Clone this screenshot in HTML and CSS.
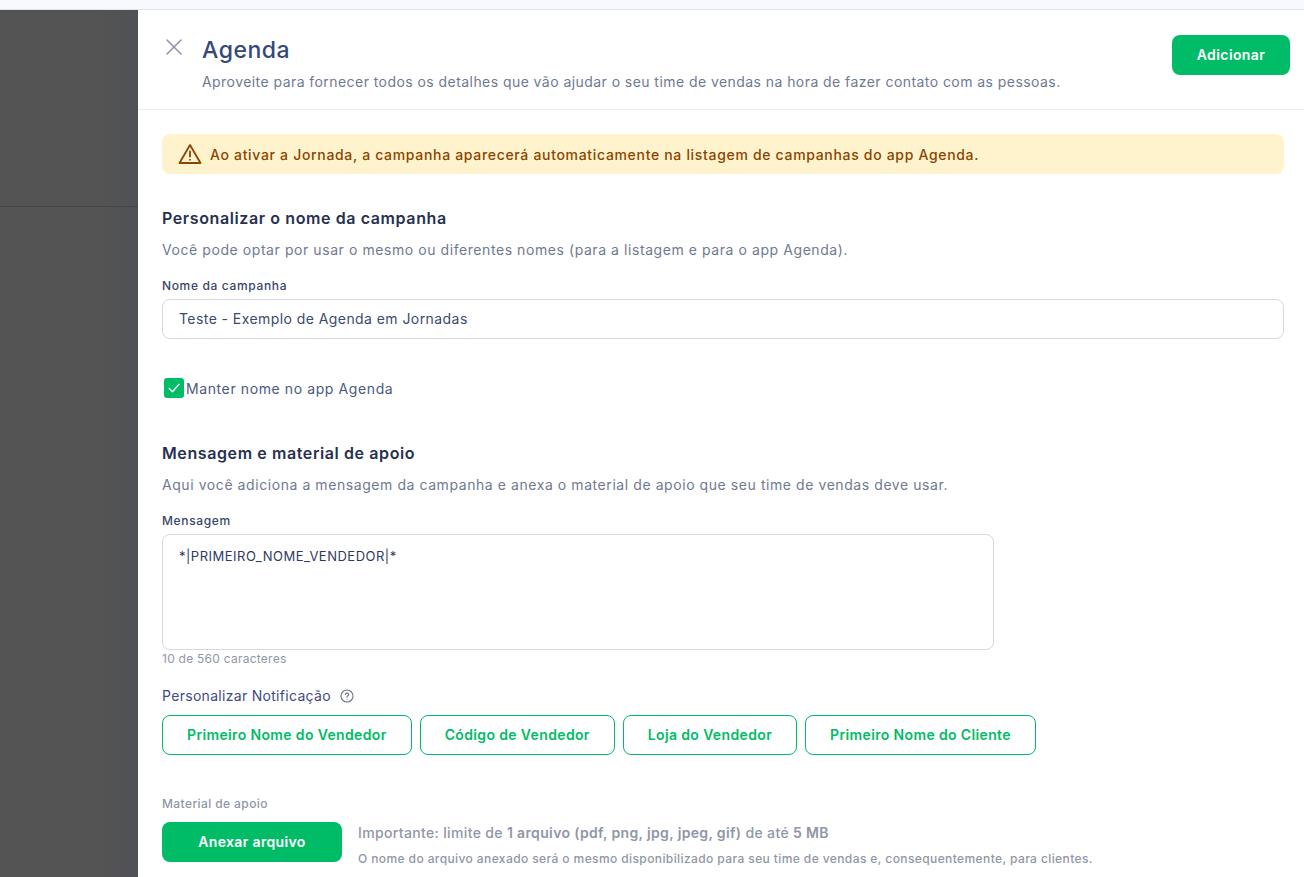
FILE: index.html
```html
<!DOCTYPE html>
<html lang="pt-BR">
<head>
  <meta charset="UTF-8">
  <meta name="viewport" content="width=device-width, initial-scale=1.0">
  <title>Agenda</title>
  <link rel="stylesheet" href="styles.css">
</head>
<body>
  <div class="top-strip"></div>
  <div class="stage">
    <!-- fundo escurecido atrás do painel -->
    <div class="scrim">
      <div class="scrim-top"></div>
    </div>

    <div class="panel">
      <header class="panel-header">
        <button class="close-btn" aria-label="Fechar">
          <svg width="18" height="18" viewBox="0 0 18 18" fill="none" stroke="#8a93a8" stroke-width="1.5" stroke-linecap="round">
            <path d="M2 2 L16 16 M16 2 L2 16"/>
          </svg>
        </button>
        <div class="header-text">
          <h1>Agenda</h1>
          <p>Aproveite para fornecer todos os detalhes que vão ajudar o seu time de vendas na hora de fazer contato com as pessoas.</p>
        </div>
        <button class="btn btn-add">Adicionar</button>
      </header>

      <div class="panel-body">
        <div class="alert">
          <svg width="24" height="22" viewBox="0 0 24 22" fill="none" stroke="#8a4500" stroke-width="1.8" stroke-linejoin="round" stroke-linecap="round">
            <path d="M12 2 L22.5 20 H1.5 Z"/>
            <path d="M12 8.5 V13.5"/>
            <path d="M12 16.6 V16.8"/>
          </svg>
          <span>Ao ativar a Jornada, a campanha aparecerá automaticamente na listagem de campanhas do app Agenda.</span>
        </div>

        <section class="section-name">
          <h2>Personalizar o nome da campanha</h2>
          <p class="hint">Você pode optar por usar o mesmo ou diferentes nomes (para a listagem e para o app Agenda).</p>
          <label class="field-label">Nome da campanha</label>
          <div class="input">Teste - Exemplo de Agenda em Jornadas</div>
          <div class="check-row">
            <span class="checkbox">
              <svg width="12" height="10" viewBox="0 0 12 10" fill="none" stroke="#fff" stroke-width="1.3" stroke-linecap="round" stroke-linejoin="round">
                <path d="M1.2 5.5 L4.5 8.7 L11 1.2"/>
              </svg>
            </span>
            <span>Manter nome no app Agenda</span>
          </div>
        </section>

        <section class="section-message">
          <h2>Mensagem e material de apoio</h2>
          <p class="hint">Aqui você adiciona a mensagem da campanha e anexa o material de apoio que seu time de vendas deve usar.</p>
          <label class="field-label">Mensagem</label>
          <div class="textarea">*|PRIMEIRO_NOME_VENDEDOR|*</div>
          <div class="counter">10 de 560 caracteres</div>

          <div class="notif-title">
            <span>Personalizar Notificação</span>
            <svg width="14" height="14" viewBox="0 0 14 14" fill="none" stroke="#6f7687" stroke-width="1.1" stroke-linecap="round">
              <circle cx="7" cy="7" r="6"/>
              <path d="M5.4 5.6 C5.4 3.6 8.7 3.7 8.7 5.5 C8.7 6.8 7 6.7 7 8.1"/>
              <path d="M7 10 V10.1"/>
            </svg>
          </div>
          <div class="tags">
            <button class="btn-tag">Primeiro Nome do Vendedor</button>
            <button class="btn-tag">Código de Vendedor</button>
            <button class="btn-tag">Loja do Vendedor</button>
            <button class="btn-tag">Primeiro Nome do Cliente</button>
          </div>

          <div class="material-label">Material de apoio</div>
          <div class="material-row">
            <button class="btn btn-attach">Anexar arquivo</button>
            <div class="material-info">
              <p class="limit">Importante: limite de <b>1 arquivo (pdf, png, jpg, jpeg, gif)</b> de até <b>5 MB</b></p>
              <p class="note">O nome do arquivo anexado será o mesmo disponibilizado para seu time de vendas e, consequentemente, para clientes.</p>
            </div>
          </div>
        </section>
      </div>
    </div>
  </div>
</body>
</html>
```

FILE: styles.css
```css
* {
  box-sizing: border-box;
}

html, body {
  height: 100%;
}

body {
  margin: 0;
  overflow: hidden;
  font-family: "Inter", "Noto Sans", sans-serif;
  background-color: #fff;
  color: #3b4a70;
}

h1, h2, p {
  margin: 0;
}

button {
  font-family: inherit;
  cursor: pointer;
}

.top-strip {
  height: 10px;
  background-color: #f8f8ff;
  border-bottom: 1px solid #e2e2ea;
}

.stage {
  display: flex;
  height: 867px;
}

.scrim {
  width: 138px;
  flex-shrink: 0;
  background: linear-gradient(to right, #545454 70%, #505157 100%);
}

.scrim-top {
  height: 197px;
  border-bottom: 1px solid #45464a;
}

.panel {
  flex: 1;
  background-color: #fff;
  border-top-left-radius: 8px;
  overflow: hidden;
}

.panel-header {
  display: flex;
  align-items: flex-start;
  height: 100px;
  padding: 20px 14px 0 27px;
  border-bottom: 1px solid #eeeef2;
}

.close-btn {
  width: 18px;
  height: 18px;
  padding: 0;
  margin-top: 8px;
  border: none;
  background: none;
  display: flex;
}

.header-text {
  flex: 1;
  margin-left: 19px;
}

.header-text h1 {
  font-size: 23px;
  font-weight: 500;
  line-height: 40px;
  letter-spacing: 0.5px;
  color: #34497a;
}

.header-text p {
  font-size: 14px;
  line-height: 24px;
  letter-spacing: 0.44px;
  color: #6f7a92;
}

.btn {
  padding: 0 0 2px;
  border: none;
  border-radius: 8px;
  background-color: #00bc66;
  color: #fff;
  font-weight: 600;
  font-size: 14px;
}

.btn-add {
  width: 118px;
  height: 40px;
  margin-top: 5px;
  letter-spacing: 0.4px;
}

.panel-body {
  padding: 24px 20px 0 24px;
}

.alert {
  display: flex;
  align-items: center;
  gap: 8px;
  height: 40px;
  padding-left: 16px;
  border-radius: 8px;
  background-color: #fff3cd;
  color: #8a4500;
  font-size: 14px;
  font-weight: 500;
  letter-spacing: 0.68px;
}

.section-name {
  margin-top: 33px;
}

h2 {
  font-size: 16px;
  font-weight: 600;
  line-height: 22px;
  letter-spacing: 0.6px;
  color: #27304f;
}

.hint {
  margin-top: 10px;
  font-size: 14px;
  line-height: 22px;
  letter-spacing: 0.57px;
  color: #6f7a92;
}

.field-label {
  display: block;
  margin-top: 16px;
  font-size: 12px;
  font-weight: 500;
  line-height: 18px;
  letter-spacing: 0.65px;
  color: #39456a;
}

.input {
  height: 40px;
  margin-top: 4px;
  padding: 0 16px;
  border: 1px solid #d6d9e0;
  border-radius: 8px;
  font-size: 14px;
  line-height: 38px;
  letter-spacing: 0.43px;
  color: #3b4a70;
}

.check-row {
  display: flex;
  align-items: center;
  margin-top: 39px;
  padding-left: 2px;
  font-size: 14px;
  letter-spacing: 0.6px;
  color: #4a5a80;
}

.checkbox {
  width: 20px;
  height: 20px;
  border-radius: 3px;
  background-color: #00bc66;
  display: flex;
  align-items: center;
  justify-content: center;
  margin-right: 2px;
}

.section-message {
  margin-top: 44px;
}

.textarea {
  width: 832px;
  height: 116px;
  margin-top: 4px;
  padding: 11px 16px;
  border: 1px solid #d6d9e0;
  border-radius: 8px;
  font-size: 13px;
  line-height: 20px;
  letter-spacing: 0.5px;
  color: #2f3b5e;
}

.counter {
  margin-top: 1px;
  font-size: 12px;
  line-height: 16px;
  letter-spacing: 0.25px;
  color: #8f96a8;
}

.notif-title {
  display: flex;
  align-items: center;
  gap: 9px;
  margin-top: 19px;
  font-size: 14px;
  line-height: 20px;
  letter-spacing: 0.3px;
  color: #3f4a80;
}

.tags {
  display: flex;
  gap: 8px;
  margin-top: 9px;
}

.btn-tag {
  height: 40px;
  padding: 0 24px 1px;
  border: 1px solid #00bc66;
  border-radius: 8px;
  background-color: #fff;
  color: #00bc66;
  font-size: 14px;
  font-weight: 600;
  letter-spacing: 0.36px;
}

.material-label {
  margin-top: 40px;
  font-size: 12px;
  font-weight: 500;
  line-height: 18px;
  letter-spacing: 0.4px;
  color: #8f96a8;
}

.material-row {
  display: flex;
  gap: 16px;
  margin-top: 9px;
}

.btn-attach {
  width: 180px;
  height: 40px;
  flex-shrink: 0;
  letter-spacing: 0.35px;
}

.limit {
  font-size: 14px;
  font-weight: 500;
  line-height: 22px;
  letter-spacing: 0.35px;
  color: #8f96a8;
}

.limit b {
  font-weight: 600;
}

.note {
  margin-top: 6px;
  font-size: 12px;
  font-weight: 500;
  line-height: 18px;
  letter-spacing: 0.4px;
  color: #8f96a8;
}
```
